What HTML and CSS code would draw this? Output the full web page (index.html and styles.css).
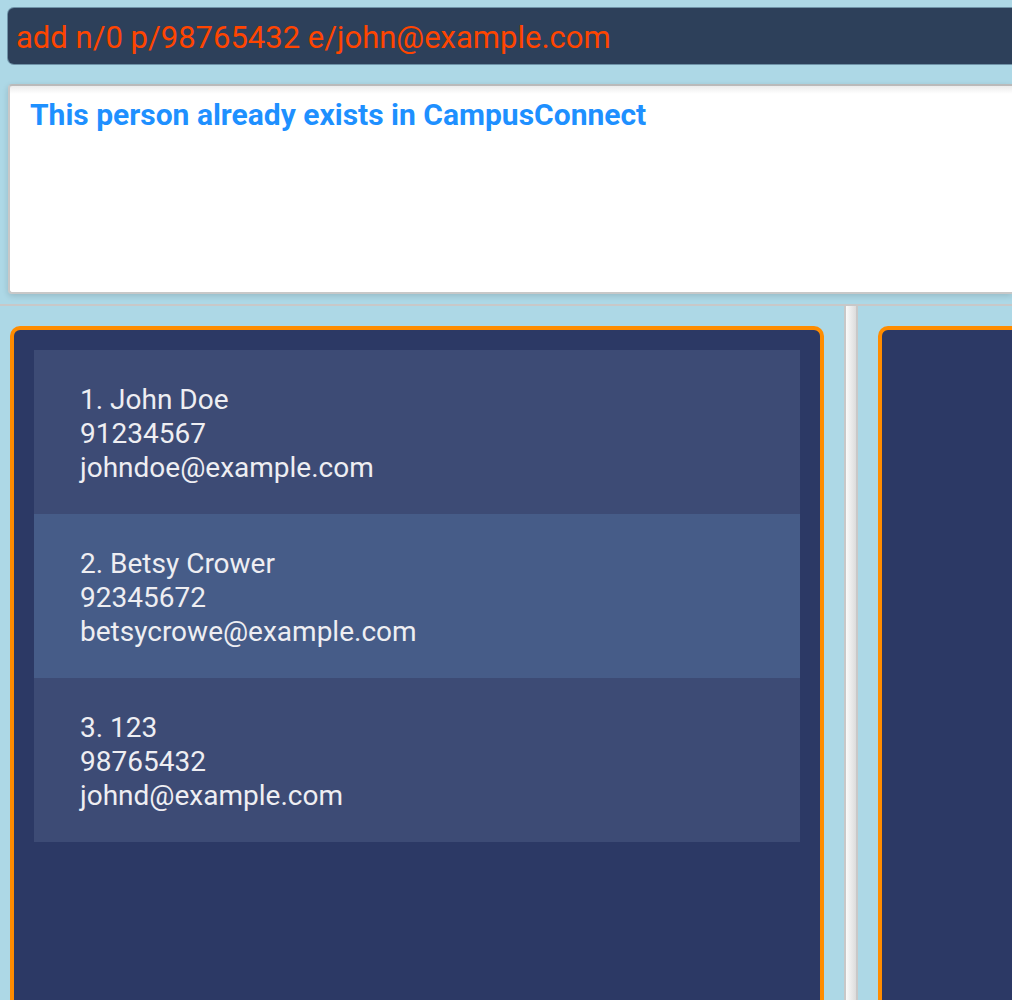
FILE: index.html
```html
<!DOCTYPE html>
<html lang="en">
<head>
<meta charset="utf-8">
<meta name="viewport" content="width=device-width, initial-scale=1">
<title>CampusConnect</title>
<link rel="stylesheet" href="styles.css">
</head>
<body>
<main class="app">
  <form class="command">
    <input class="command-box" type="text" aria-label="Command" autocomplete="off" spellcheck="false" value="add n/0 p/98765432 e/john@example.com">
  </form>
  <section class="result">
    <textarea class="result-box" aria-label="Result" readonly>This person already exists in CampusConnect</textarea>
  </section>
  <div class="split">
    <section class="pane" aria-label="Contacts">
      <div class="panel">
        <ul class="people">
          <li class="person">
            <span>1. John Doe</span>
            <span>91234567</span>
            <span>johndoe@example.com</span>
          </li>
          <li class="person">
            <span>2. Betsy Crower</span>
            <span>92345672</span>
            <span>betsycrowe@example.com</span>
          </li>
          <li class="person">
            <span>3. 123</span>
            <span>98765432</span>
            <span>johnd@example.com</span>
          </li>
        </ul>
      </div>
    </section>
    <div class="divider" role="separator" aria-orientation="vertical"></div>
    <section class="pane pane-cut" aria-label="Details">
      <div class="panel"></div>
    </section>
  </div>
</main>
</body>
</html>
```
FILE: styles.css
```css
* {
  box-sizing: border-box;
}

body {
  margin: 0;
  background: #add8e6;
  font-family: Roboto, "Liberation Sans", sans-serif;
}

.app {
  display: flex;
  flex-direction: column;
  min-height: 100vh;
}

.command {
  padding: 8px 0 0 8px;
}

.command-box {
  display: block;
  width: 100%;
  height: 56px;
  padding: 2px 8px 0;
  border: 0;
  border-radius: 6px 0 0 6px;
  outline: 0;
  background: #2d405a;
  box-shadow: 0 0 0 1px #6f93a8;
  color: #ff4500;
  font: 400 31px/40px Roboto, "Liberation Sans", sans-serif;
}

.result {
  padding: 20px 0 10px 8px;
}

.result-box {
  display: block;
  width: 100%;
  height: 210px;
  padding: 9px 20px;
  border: 2px solid #c8c8c8;
  border-top-color: #bababa;
  border-right: 0;
  border-radius: 4px 0 0 4px;
  outline: 0;
  resize: none;
  background: linear-gradient(#ebebeb, #ffffff 8px);
  box-shadow: 0 2px 6px rgba(0, 0, 0, 0.14);
  color: #1e90ff;
  font: 700 30px/40px Roboto, "Liberation Sans", sans-serif;
}

.split {
  display: grid;
  flex: 1;
  grid-template-columns: minmax(0, 844fr) 14px minmax(0, 154fr);
  border-top: 2px solid #c8c8c8;
}

.pane {
  display: flex;
  padding: 20px 20px 0 10px;
}

.pane-cut {
  padding: 20px 0 0 20px;
}

.panel {
  flex: 1;
  padding: 20px;
  border: 4px solid #ff8c00;
  border-bottom: 0;
  border-radius: 10px 10px 0 0;
  background: #2c3965;
}

.pane-cut .panel {
  border-right: 0;
  border-radius: 10px 0 0 0;
}

.divider {
  border: solid #c8c8c8;
  border-width: 0 2px;
  background: linear-gradient(to right, #fafafa, #dcdcdc);
}

.people {
  margin: 0;
  padding: 0;
  list-style: none;
}

.person {
  display: flex;
  flex-direction: column;
  padding: 33px 46px 29px;
  background: #3d4b75;
  color: #eeeef2;
  font-size: 28px;
  line-height: 34px;
}

.person:nth-child(even) {
  background: #465c88;
}
```
